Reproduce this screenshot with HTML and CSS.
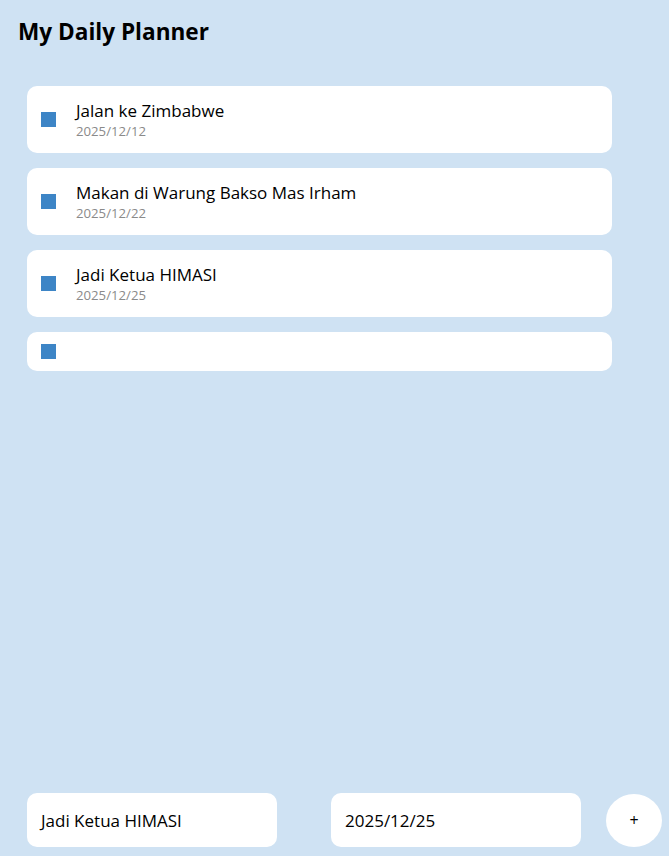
FILE: index.html
```html
<!DOCTYPE html>
<html lang="id">
<head>
<meta charset="utf-8">
<title>My Daily Planner</title>
<link rel="stylesheet" href="styles.css">
</head>
<body>
<div class="app">
  <h1 class="title">My Daily Planner</h1>
  <ul class="list">
    <li class="card">
      <span class="check"></span>
      <div class="info">
        <div class="name">Jalan ke Zimbabwe</div>
        <div class="date">2025/12/12</div>
      </div>
    </li>
    <li class="card">
      <span class="check"></span>
      <div class="info">
        <div class="name">Makan di Warung Bakso Mas Irham</div>
        <div class="date">2025/12/22</div>
      </div>
    </li>
    <li class="card">
      <span class="check"></span>
      <div class="info">
        <div class="name">Jadi Ketua HIMASI</div>
        <div class="date">2025/12/25</div>
      </div>
    </li>
    <li class="card card-empty">
      <span class="check"></span>
    </li>
  </ul>
  <form class="form">
    <div class="field">Jadi Ketua HIMASI</div>
    <div class="field">2025/12/25</div>
    <button type="button" class="add">+</button>
  </form>
</div>
</body>
</html>
```

FILE: styles.css
```css
html, body {
  margin: 0;
  padding: 0;
  background: #cfe2f3;
  font-family: "Open Sans", "Noto Sans", sans-serif;
  color: #000;
}
.app {
  min-height: 856px;
  box-sizing: border-box;
  display: flex;
  flex-direction: column;
  padding: 0 0 9px 18px;
}
.title {
  margin: 16px 0 0 0;
  font-size: 22.6px;
  line-height: 32px;
  font-weight: 700;
}
.list {
  list-style: none;
  margin: 38px 0 0 9px;
  padding: 0;
  width: 585px;
  flex: 1;
  display: flex;
  flex-direction: column;
  gap: 15px;
}
.card {
  background: #fff;
  border-radius: 10px;
  height: 67px;
  box-sizing: border-box;
  padding: 0 14px;
  display: flex;
  align-items: center;
  gap: 20px;
}
.card-empty {
  height: 39px;
}
.check {
  width: 15px;
  height: 15px;
  background: #3d85c6;
  flex: none;
}
.info {
  display: flex;
  flex-direction: column;
}
.name {
  font-size: 17px;
  line-height: 22px;
}
.date {
  margin-top: 1px;
  font-size: 13.2px;
  line-height: 17px;
  color: #8a8a8a;
}
.form {
  display: flex;
  align-items: center;
  margin: 0 0 0 9px;
}
.field {
  width: 250px;
  height: 54px;
  box-sizing: border-box;
  background: #fff;
  border-radius: 10px;
  padding: 0 14px;
  display: flex;
  align-items: center;
  font-size: 17px;
}
.field + .field {
  margin-left: 54px;
}
.add {
  margin-left: 25px;
  width: 56px;
  height: 53px;
  border: none;
  border-radius: 50%;
  background: #fff;
  font-family: "Open Sans", sans-serif;
  font-size: 16px;
  color: #000;
  padding: 0;
}
```
